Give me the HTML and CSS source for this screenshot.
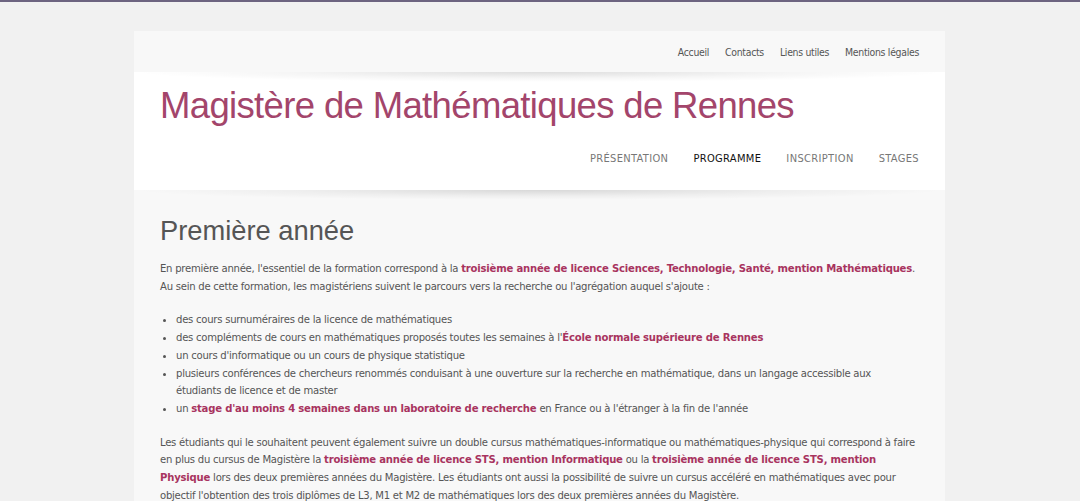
FILE: index.html
```html
<!DOCTYPE html>
<html lang="fr">
<head>
<meta charset="utf-8">
<title>Magistère de Mathématiques de Rennes</title>
<link rel="stylesheet" href="styles.css">
</head>
<body>
<div class="topline"></div>
<div class="page">
  <div class="site">
    <div class="topbar">
      <nav class="toplinks">
        <a href="#">Accueil</a>
        <a href="#">Contacts</a>
        <a href="#">Liens utiles</a>
        <a href="#">Mentions légales</a>
      </nav>
    </div>
    <header class="header">
      <h1 class="title">Magistère de Mathématiques de Rennes</h1>
      <nav class="mainnav">
        <a href="#">Présentation</a>
        <a href="#" class="active">Programme</a>
        <a href="#">Inscription</a>
        <a href="#">Stages</a>
      </nav>
    </header>
    <main class="content">
      <h2 class="heading">Première année</h2>
      <p>En première année, l'essentiel de la formation correspond à la <a href="#" class="hl">troisième année de licence Sciences, Technologie, Santé, mention Mathématiques</a>. Au sein de cette formation, les magistériens suivent le parcours vers la recherche ou l'agrégation auquel s'ajoute :</p>
      <ul class="list">
        <li>des cours surnuméraires de la licence de mathématiques</li>
        <li>des compléments de cours en mathématiques proposés toutes les semaines à l'<a href="#" class="hl">École normale supérieure de Rennes</a></li>
        <li>un cours d'informatique ou un cours de physique statistique</li>
        <li>plusieurs conférences de chercheurs renommés conduisant à une ouverture sur la recherche en mathématique, dans un langage accessible aux étudiants de licence et de master</li>
        <li>un <a href="#" class="hl">stage d'au moins 4 semaines dans un laboratoire de recherche</a> en France ou à l'étranger à la fin de l'année</li>
      </ul>
      <p>Les étudiants qui le souhaitent peuvent également suivre un double cursus mathématiques-informatique ou mathématiques-physique qui correspond à faire en plus du cursus de Magistère la <a href="#" class="hl">troisième année de licence STS, mention Informatique</a> ou la <a href="#" class="hl">troisième année de licence STS, mention Physique</a> lors des deux premières années du Magistère. Les étudiants ont aussi la possibilité de suivre un cursus accéléré en mathématiques avec pour objectif l'obtention des trois diplômes de L3, M1 et M2 de mathématiques lors des deux premières années du Magistère.</p>
    </main>
  </div>
</div>
</body>
</html>
```
FILE: styles.css
```css
html, body {
  margin: 0;
  padding: 0;
}
body {
  background: #f1f1f1;
  font-family: "DejaVu Sans Condensed", "DejaVu Sans", sans-serif;
  color: #555;
  overflow: hidden;
  height: 501px;
}
.topline {
  height: 2px;
  background: #6d6480;
}
.page {
  padding-top: 29px;
  display: flex;
  justify-content: center;
}
.site {
  width: 811px;
  margin-left: -1px;
}
a {
  text-decoration: none;
}
.topbar {
  height: 41px;
  background: #f8f8f8;
  display: flex;
  align-items: center;
  justify-content: flex-end;
  padding-right: 26px;
}
.toplinks {
  display: flex;
  gap: 16px;
  font-size: 10.4px;
  letter-spacing: -0.3px;
  margin-top: 1px;
}
.toplinks a {
  color: #555;
}
.header {
  position: relative;
  background: #fff;
  height: 118px;
  padding: 0 26px;
}
.header::before,
.content::before {
  content: "";
  position: absolute;
  left: 0;
  right: 0;
  top: 0;
  height: 10px;
  background: radial-gradient(ellipse 50% 100% at 50% 0%, rgba(0,0,0,0.13), rgba(0,0,0,0.04) 60%, rgba(0,0,0,0) 100%);
}
.title {
  margin: 0;
  padding-top: 14px;
  font-family: "Liberation Sans", Arial, sans-serif;
  font-weight: normal;
  font-size: 36.5px;
  letter-spacing: -0.65px;
  line-height: 40px;
  color: #a3456b;
}
.mainnav {
  display: flex;
  justify-content: flex-end;
  gap: 25px;
  margin-top: 26px;
  font-size: 11px;
  text-transform: uppercase;
  letter-spacing: 0.35px;
}
.mainnav a {
  color: #777;
}
.mainnav a.active {
  color: #111;
}
.content {
  position: relative;
  background: #f8f8f8;
  padding: 25px 26px 40px;
  font-size: 11.2px;
  letter-spacing: -0.25px;
  line-height: 17.7px;
}
.heading {
  margin: 0 0 13px;
  font-family: "Liberation Sans", Arial, sans-serif;
  font-weight: normal;
  font-size: 27.3px;
  line-height: 32px;
  color: #555;
  letter-spacing: 0;
}
.content p {
  margin: 0 0 16px;
}
.list {
  margin: 0 0 16px;
  padding: 0 16px 0 16px;
}
.hl {
  color: #a8345f;
  font-weight: bold;
  letter-spacing: -0.2px;
}
```
